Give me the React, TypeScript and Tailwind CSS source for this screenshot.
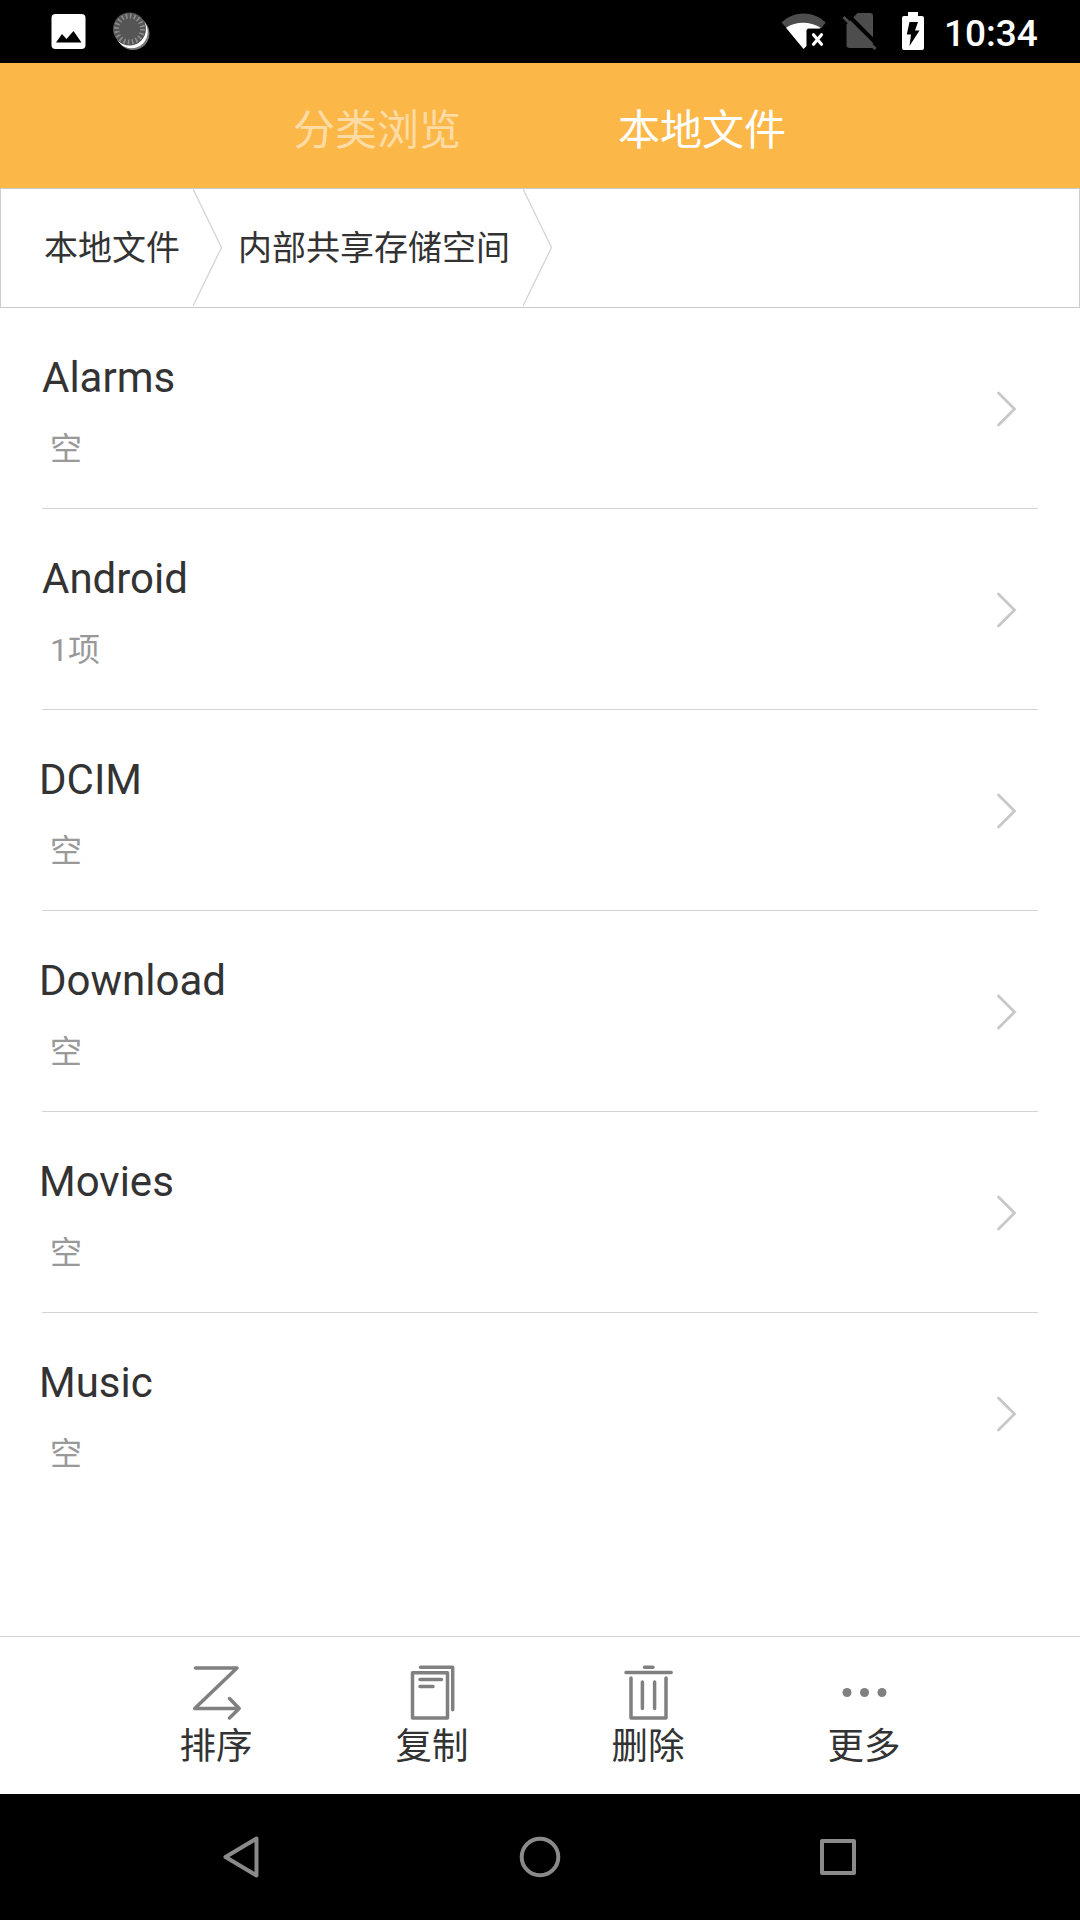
import React from 'react';

type Folder = { name: string; detail: string; indent: string };

const folders: Folder[] = [
  { name: 'Alarms', detail: '空', indent: 'pl-[42px]' },
  { name: 'Android', detail: '1项', indent: 'pl-[42px]' },
  { name: 'DCIM', detail: '空', indent: 'pl-[39px]' },
  { name: 'Download', detail: '空', indent: 'pl-[39px]' },
  { name: 'Movies', detail: '空', indent: 'pl-[39px]' },
  { name: 'Music', detail: '空', indent: 'pl-[39px]' },
];

function PictureIcon() {
  return (
    <svg width="35" height="35" viewBox="0 0 35 35">
      <rect x=".5" width="34" height="35" rx="4" fill="#fff" />
      <path d="M5 28.5 11 20l4.500 5 7-8 8 11.500z" fill="#000" />
    </svg>
  );
}

function SpinnerIcon() {
  return (
    <svg width="38" height="40" viewBox="0 0 38 40">
      <circle cx="20" cy="21.5" r="16.5" fill="#777" />
      <circle cx="18.500" cy="20" r="16.2" fill="#fff" />
      <circle cx="16.5" cy="17" r="16.5" fill="#555" />
      <circle cx="16.5" cy="17" r="13" fill="none" stroke="#8c8c8c" strokeWidth="5" strokeDasharray="1.600 2.484" />
    </svg>
  );
}

function WifiIcon() {
  return (
    <svg width="46" height="38" viewBox="0 0 46 38">
      <path d="M.5 9.5C13-2.5 32-2.5 44.700 9.500L40 15.500H22z" fill="#4d4d4d" />
      <path d="M.5 9.500 6 15.500H22V4z" fill="#4d4d4d" />
      <path d="M5 14.700C15 8 29 8 39.500 14.700L38.500 15.500H27L25.500 17V33L22.500 36z" fill="#fff" />
      <path d="m32.500 21.800 8 9.400m0-9.400-8 9.400" stroke="#fff" strokeWidth="3.200" strokeLinecap="round" />
    </svg>
  );
}

function NoSimIcon() {
  return (
    <svg width="36" height="38" viewBox="0 0 36 38">
      <path d="M15.500 0H28Q31 0 31 3V35H7.500Q4.500 35 4.500 32V11.500z" fill="#4d4d4d" />
      <path d="M4 0 35 31" stroke="#000" strokeWidth="4" />
      <path d="M1.500 4 33.500 36" stroke="#4d4d4d" strokeWidth="3" />
    </svg>
  );
}

function BatteryIcon() {
  return (
    <svg width="22" height="38" viewBox="0 0 22 38">
      <path d="M6 0h10v4h4q2 0 2 2v30q0 2-2 2H2q-2 0-2-2V6q0-2 2-2h4z" fill="#fff" />
      <path d="M7.500 10H16l-3 8.500h4.500L7.500 34l1.500-11.500H4.800z" fill="#000" />
    </svg>
  );
}

function StatusBar() {
  return (
    <div className="flex h-[63px] items-start bg-black">
      <div className="ml-[51px] mt-[14px]"><PictureIcon /></div>
      <div className="ml-[27px] mt-[12px]"><SpinnerIcon /></div>
      <div className="ml-auto mt-[13px]"><WifiIcon /></div>
      <div className="ml-[15px] mt-[13px]"><NoSimIcon /></div>
      <div className="ml-[24px] mt-[12px]"><BatteryIcon /></div>
      <div className="ml-[20px] mr-[42px] mt-[10px] w-[94px] whitespace-nowrap text-[37px] font-medium leading-[48px] text-white">10:34</div>
    </div>
  );
}

function CrumbArrow() {
  return (
    <svg width="30" height="118" viewBox="0 0 30 118" fill="none">
      <path d="M0 0 28.500 58.500 0 117" stroke="#d4d4d4" strokeWidth="1.300" />
    </svg>
  );
}

function FolderRow({ name, detail, indent, last }: Folder & { last: boolean }) {
  return (
    <li className="flex h-[201px] flex-col">
      <div className="flex flex-1 items-center justify-between">
        <div>
          <div className={'mt-[9px] h-[50px] whitespace-nowrap text-[42px] leading-[50px] text-[#333] ' + indent}>{name}</div>
          <div className="mt-[22px] h-[48px] pl-[50px] text-[32px] leading-[48px] text-[#999]">{detail}</div>
        </div>
        <svg className="mr-[62px]" width="22" height="38" viewBox="0 0 22 38" fill="none">
          <path d="M2.500 4 18.500 20 2.500 36" stroke="#c8c8c8" strokeWidth="2.800" strokeLinecap="round" />
        </svg>
      </div>
      <div className={last ? 'h-px' : 'mx-[42px] h-px bg-[#d4d4d4]'} />
    </li>
  );
}

const sortIcon = (
  <svg width="56" height="56" viewBox="0 0 56 56" fill="none" stroke="#808080" strokeWidth="3.500" strokeLinecap="round" strokeLinejoin="round">
    <path d="M7.500 2.900H49L6.700 43.500H51M41.500 33.500 51.200 43.500 41.500 53" />
  </svg>
);

const copyIcon = (
  <svg width="56" height="56" viewBox="0 0 56 56" fill="none" stroke="#808080" strokeWidth="3.500" strokeLinecap="round" strokeLinejoin="round">
    <path d="M16.500 2.200H48.700V44.800M8.500 7.700H43.500V53H8.500zM16 14.500H37.500M16 21.500H29" />
  </svg>
);

const deleteIcon = (
  <svg width="56" height="56" viewBox="0 0 56 56" fill="none" stroke="#808080" strokeWidth="3.500" strokeLinecap="round" strokeLinejoin="round">
    <path d="M24.500 2.200H33M6 7.500H51.200M11 13V53H46V13M22.400 17V43.500M34.600 17V43.500" />
  </svg>
);

const moreIcon = (
  <svg width="56" height="56" viewBox="0 0 56 56" fill="#808080">
    <circle cx="11" cy="27.500" r="4.500" />
    <circle cx="28.500" cy="27.500" r="4.500" />
    <circle cx="46" cy="27.500" r="4.500" />
  </svg>
);

const actions = [
  { label: '排序', icon: sortIcon },
  { label: '复制', icon: copyIcon },
  { label: '删除', icon: deleteIcon },
  { label: '更多', icon: moreIcon },
];

export default function App() {
  return (
    <div className="flex h-[1920px] w-[1080px] flex-col overflow-hidden bg-white font-['Roboto','Noto_Sans_CJK_SC',sans-serif]">
      <StatusBar />
      <header className="flex h-[125px] items-center bg-[#fbb849] pt-[11px] text-[42px] leading-[60px] text-white">
        <div className="ml-[293px] w-[168px] whitespace-nowrap text-white/50">分类浏览</div>
        <div className="ml-[157px] w-[168px] whitespace-nowrap">本地文件</div>
      </header>
      <nav className="flex h-[120px] items-center border border-[#ccc] text-[34px] leading-[50px] text-[#333]">
        <div className="ml-[43px] w-[136px] whitespace-nowrap">本地文件</div>
        <div className="ml-[13px]"><CrumbArrow /></div>
        <div className="ml-[15px] w-[272px] whitespace-nowrap">内部共享存储空间</div>
        <div className="ml-[13px]"><CrumbArrow /></div>
      </nav>
      <ul className="flex-1">
        {folders.map((f, i) => (
          <FolderRow key={f.name} {...f} last={i === folders.length - 1} />
        ))}
      </ul>
      <footer className="grid h-[158px] grid-cols-4 border-t border-[#d4d4d4] px-[108px]">
        {actions.map((a) => (
          <button key={a.label} className="flex flex-col items-center pt-[28px]">
            {a.icon}
            <span className="mt-[2px] text-[36.500px] leading-[48px] text-[#333]">{a.label}</span>
          </button>
        ))}
      </footer>
      <div className="flex h-[126px] items-center bg-black">
        <svg className="ml-[221px]" width="40" height="44" viewBox="0 0 40 44" fill="none">
          <path d="M35.500 3.500V40.500L4.500 22z" stroke="#8a8a8a" strokeWidth="4" strokeLinejoin="round" />
        </svg>
        <svg className="ml-[257px]" width="44" height="44" viewBox="0 0 44 44" fill="none">
          <circle cx="22" cy="22" r="18.300" stroke="#8a8a8a" strokeWidth="4" />
        </svg>
        <svg className="ml-[256px]" width="40" height="44" viewBox="0 0 40 44" fill="none">
          <rect x="4" y="6" width="32" height="32" stroke="#8a8a8a" strokeWidth="4" strokeLinejoin="round" />
        </svg>
      </div>
    </div>
  );
}
